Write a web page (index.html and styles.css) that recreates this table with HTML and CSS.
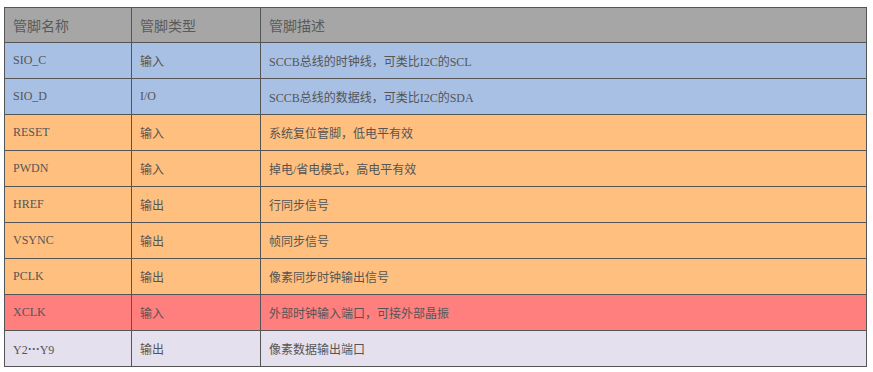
FILE: index.html
```html
<!DOCTYPE html>
<html lang="zh-CN">
<head>
<meta charset="utf-8">
<title>管脚描述</title>
<link rel="stylesheet" href="styles.css">
</head>
<body>
<table class="pins">
  <colgroup>
    <col class="c1"><col class="c2"><col class="c3">
  </colgroup>
  <thead>
    <tr class="head"><th>管脚名称</th><th>管脚类型</th><th>管脚描述</th></tr>
  </thead>
  <tbody>
    <tr class="blue"><td>SIO_C</td><td>输入</td><td>SCCB总线的时钟线，可类比I2C的SCL</td></tr>
    <tr class="blue"><td>SIO_D</td><td>I/O</td><td>SCCB总线的数据线，可类比I2C的SDA</td></tr>
    <tr class="orange"><td>RESET</td><td>输入</td><td>系统复位管脚，低电平有效</td></tr>
    <tr class="orange"><td>PWDN</td><td>输入</td><td>掉电/省电模式，高电平有效</td></tr>
    <tr class="orange"><td>HREF</td><td>输出</td><td>行同步信号</td></tr>
    <tr class="orange"><td>VSYNC</td><td>输出</td><td>帧同步信号</td></tr>
    <tr class="orange"><td>PCLK</td><td>输出</td><td>像素同步时钟输出信号</td></tr>
    <tr class="red"><td>XCLK</td><td>输入</td><td>外部时钟输入端口，可接外部晶振</td></tr>
    <tr class="lav"><td>Y2<span class="ell">⋯</span>Y9</td><td>输出</td><td>像素数据输出端口</td></tr>
  </tbody>
</table>
</body>
</html>
```
FILE: styles.css
```css
html, body {
  margin: 0;
  padding: 0;
  background: #ffffff;
}
body {
  padding: 7px 0 0 4px;
}
.pins {
  border-collapse: collapse;
  table-layout: fixed;
  width: 862px;
  font-family: "Liberation Serif", "Noto Sans CJK SC", serif;
  color: #555555;
}
.c1 { width: 127px; }
.c2 { width: 129px; }
.c3 { width: 606px; }
.pins th, .pins td {
  border: 1px solid #555555;
  padding: 0 0 0 8px;
  text-align: left;
  vertical-align: middle;
  white-space: nowrap;
}
.pins th {
  height: 34px;
  font-size: 14px;
  font-weight: normal;
  font-family: "Noto Sans CJK SC", sans-serif;
  color: #5a5a5a;
}
.pins td {
  height: 35px;
  font-size: 12px;
}
.ell {
  font-family: "Noto Sans CJK SC", sans-serif;
  font-weight: bold;
}
.head { background: #a6a6a6; }
.blue { background: #a8c0e4; }
.orange { background: #ffc07f; }
.red { background: #ff7f7f; }
.lav { background: #e5e0ed; }
```
